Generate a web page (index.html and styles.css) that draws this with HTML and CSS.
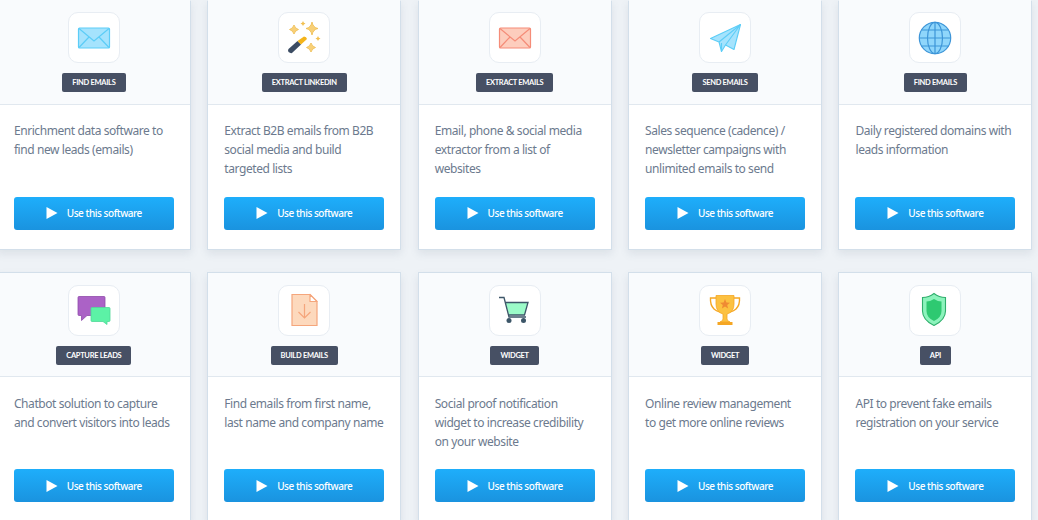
FILE: index.html
```html
<!DOCTYPE html>
<html lang="en">

<head>
    <meta charset="UTF-8">
    <meta name="viewport" content="width=device-width, initial-scale=1.0">
    <title>Software</title>
    <link rel="stylesheet" href="styles.css">
</head>

<body>
    <div class="grid">
        <div class="card">
            <div class="head">
                <div class="icon">
                    <svg width="40" height="40" viewBox="0 0 40 40">
                        <rect x="4.5" y="10" width="31" height="20" rx="1" fill="#a5e3fd" stroke="#5ccdf7" stroke-width="1.2" />
                        <path d="M5 10.5 L20 23 L35 10.5 M5 29.5 L15 19 M35 29.5 L25 19" fill="none" stroke="#5ccdf7" stroke-width="1.2" />
                    </svg>
                </div>
                <span class="tag">Find emails</span>
            </div>
            <div class="body">
                <p>Enrichment data software to find new leads (emails)</p>
                <a class="btn"><svg width="12" height="12" viewBox="0 0 12 12"><path d="M0.5 0 L11.5 6 L0.5 12 Z" fill="#fff" /></svg>Use this software</a>
            </div>
        </div>

        <div class="card">
            <div class="head">
                <div class="icon">
                    <svg width="40" height="40" viewBox="0 0 40 40">
                        <path d="M13.5 23 L17 26.5 L8 35 Q6.5 35.5 4.5 34 Q3.5 32 4.5 31 Z" fill="#3c4c63" />
                        <path d="M13.5 23 L20 18.5 Q22.5 18.5 23 21 L17 26.5 Z" fill="#f4b41a" />
                        <path d="M28 4 Q29 9.5 34 10.5 Q29 11.5 28 17 Q27 11.5 22 10.5 Q27 9.5 28 4 Z" fill="#f8d078" stroke="#eebb4d" stroke-width="0.8" />
                        <path d="M10 7 Q11 10.5 14.5 11.5 Q11 12.5 10 16 Q9 12.5 5.5 11.5 Q9 10.5 10 7 Z" fill="#f8d078" stroke="#eebb4d" stroke-width="0.8" />
                        <path d="M27 25 Q28 28.5 31.5 29.5 Q28 30.5 27 34 Q26 30.5 22.5 29.5 Q26 28.5 27 25 Z" fill="#f8d078" stroke="#eebb4d" stroke-width="0.8" />
                        <path d="M34 18 Q34.5 20 36.5 20.5 Q34.5 21 34 23 Q33.5 21 31.5 20.5 Q33.5 20 34 18 Z" fill="#f2c050" />
                        <path d="M19 3 Q19.5 5 21.5 5.5 Q19.5 6 19 8 Q18.5 6 16.5 5.5 Q18.5 5 19 3 Z" fill="#f2c050" />
                    </svg>
                </div>
                <span class="tag">Extract LinkedIn</span>
            </div>
            <div class="body">
                <p>Extract B2B emails from B2B social media and build targeted lists</p>
                <a class="btn"><svg width="12" height="12" viewBox="0 0 12 12"><path d="M0.5 0 L11.5 6 L0.5 12 Z" fill="#fff" /></svg>Use this software</a>
            </div>
        </div>

        <div class="card">
            <div class="head">
                <div class="icon">
                    <svg width="40" height="40" viewBox="0 0 40 40">
                        <rect x="4.5" y="10" width="31" height="20" rx="1" fill="#fdcdbd" stroke="#f58c78" stroke-width="1.2" />
                        <path d="M5 10.5 L20 23 L35 10.5 M5 29.5 L15 19 M35 29.5 L25 19" fill="none" stroke="#f58c78" stroke-width="1.2" />
                    </svg>
                </div>
                <span class="tag">Extract emails</span>
            </div>
            <div class="body">
                <p>Email, phone &amp; social media extractor from a list of websites</p>
                <a class="btn"><svg width="12" height="12" viewBox="0 0 12 12"><path d="M0.5 0 L11.5 6 L0.5 12 Z" fill="#fff" /></svg>Use this software</a>
            </div>
        </div>

        <div class="card">
            <div class="head">
                <div class="icon">
                    <svg width="40" height="40" viewBox="0 0 40 40">
                        <path d="M35.5 6.5 L5.5 20.5 L14 24 L16.5 33.5 L20.5 27 L29 31.5 Z" fill="#a5e3fd" stroke="#5ccdf7" stroke-width="1.1" stroke-linejoin="round" />
                        <path d="M35.5 6.5 L14 24 M35.5 6.5 L20.5 27 M16.5 33.5 L16.5 25" fill="none" stroke="#5ccdf7" stroke-width="1.1" />
                    </svg>
                </div>
                <span class="tag">Send emails</span>
            </div>
            <div class="body">
                <p>Sales sequence (cadence) / newsletter campaigns with unlimited emails to send</p>
                <a class="btn"><svg width="12" height="12" viewBox="0 0 12 12"><path d="M0.5 0 L11.5 6 L0.5 12 Z" fill="#fff" /></svg>Use this software</a>
            </div>
        </div>

        <div class="card">
            <div class="head">
                <div class="icon">
                    <svg width="40" height="40" viewBox="0 0 40 40">
                        <circle cx="20" cy="20" r="15.7" fill="#8fd6fb" stroke="#3d95d8" stroke-width="1.2" />
                        <ellipse cx="20" cy="20" rx="7.5" ry="15.7" fill="none" stroke="#3d95d8" stroke-width="1.2" />
                        <path d="M20 4.3 V35.7 M4.3 20 H35.7 M6.5 12 H33.5 M6.5 28 H33.5" fill="none" stroke="#3d95d8" stroke-width="1.2" />
                    </svg>
                </div>
                <span class="tag">Find emails</span>
            </div>
            <div class="body">
                <p>Daily registered domains with leads information</p>
                <a class="btn"><svg width="12" height="12" viewBox="0 0 12 12"><path d="M0.5 0 L11.5 6 L0.5 12 Z" fill="#fff" /></svg>Use this software</a>
            </div>
        </div>

        <div class="card">
            <div class="head">
                <div class="icon">
                    <svg width="40" height="40" viewBox="0 0 40 40">
                        <path d="M5 6.5 H30 Q31 6.5 31 7.5 V24.5 Q31 25.5 30 25.5 H13 L7.5 30.5 V25.5 H5 Q4 25.5 4 24.5 V7.5 Q4 6.5 5 6.5 Z" fill="#ab62c6" stroke="#8f4bab" stroke-width="0.8" />
                        <path d="M18 17.5 H35 Q36 17.5 36 18.5 V30.5 Q36 31.5 35 31.5 H33 V34.5 L29 31.5 H18 Q17 31.5 17 30.5 V18.5 Q17 17.5 18 17.5 Z" fill="#5cf2a6" stroke="#4fd898" stroke-width="0.8" />
                    </svg>
                </div>
                <span class="tag">Capture leads</span>
            </div>
            <div class="body">
                <p>Chatbot solution to capture and convert visitors into leads</p>
                <a class="btn"><svg width="12" height="12" viewBox="0 0 12 12"><path d="M0.5 0 L11.5 6 L0.5 12 Z" fill="#fff" /></svg>Use this software</a>
            </div>
        </div>

        <div class="card">
            <div class="head">
                <div class="icon">
                    <svg width="40" height="40" viewBox="0 0 40 40">
                        <path d="M8 4.5 H26 L33 11.5 V35.5 H8 Z" fill="#fdd9bd" stroke="#f5a67c" stroke-width="1.2" />
                        <path d="M26 4.5 V11.5 H33 Z" fill="#fff" stroke="#f5a67c" stroke-width="1.2" stroke-linejoin="round" />
                        <path d="M20.5 14 V28 M14.5 22 L20.5 28 L26.5 22" fill="none" stroke="#f5a67c" stroke-width="1.2" />
                    </svg>
                </div>
                <span class="tag">Build emails</span>
            </div>
            <div class="body">
                <p>Find emails from first name, last name and company name</p>
                <a class="btn"><svg width="12" height="12" viewBox="0 0 12 12"><path d="M0.5 0 L11.5 6 L0.5 12 Z" fill="#fff" /></svg>Use this software</a>
            </div>
        </div>

        <div class="card">
            <div class="head">
                <div class="icon">
                    <svg width="40" height="40" viewBox="0 0 40 40">
                        <path d="M10.5 12.5 H33 L29.5 25 H14 Z" fill="#9bfbc8" />
                        <path d="M4 7.5 H9 L14 27 H31 M10.5 12.5 H33 L29.5 25 H14" fill="none" stroke="#3c5668" stroke-width="1.3" />
                        <circle cx="14" cy="30.5" r="2.5" fill="#3c5668" />
                        <circle cx="28.5" cy="30.5" r="2.5" fill="#3c5668" />
                    </svg>
                </div>
                <span class="tag">Widget</span>
            </div>
            <div class="body">
                <p>Social proof notification widget to increase credibility on your website</p>
                <a class="btn"><svg width="12" height="12" viewBox="0 0 12 12"><path d="M0.5 0 L11.5 6 L0.5 12 Z" fill="#fff" /></svg>Use this software</a>
            </div>
        </div>

        <div class="card">
            <div class="head">
                <div class="icon">
                    <svg width="40" height="40" viewBox="0 0 40 40">
                        <path d="M11.5 8 H5.5 Q5 15 9 19 Q11 21 15 22 M28.5 8 H34.5 Q35 15 31 19 Q29 21 25 22" fill="none" stroke="#f5a623" stroke-width="1.4" />
                        <path d="M11 5.5 H29 V14 Q29 22 22 24 V29 Q22 31 25 32 H15 Q18 31 18 29 V24 Q11 22 11 14 Z" fill="#fcc140" stroke="#f5a623" stroke-width="0.8" />
                        <rect x="12.5" y="32" width="15" height="3" fill="#f5a623" />
                        <path d="M20 9 L21.4 12.4 L25 12.7 L22.2 15 L23.1 18.5 L20 16.6 L16.9 18.5 L17.8 15 L15 12.7 L18.6 12.4 Z" fill="#ef8a33" />
                    </svg>
                </div>
                <span class="tag">Widget</span>
            </div>
            <div class="body">
                <p>Online review management<br>to get more online reviews</p>
                <a class="btn"><svg width="12" height="12" viewBox="0 0 12 12"><path d="M0.5 0 L11.5 6 L0.5 12 Z" fill="#fff" /></svg>Use this software</a>
            </div>
        </div>

        <div class="card">
            <div class="head">
                <div class="icon">
                    <svg width="40" height="40" viewBox="0 0 40 40">
                        <path d="M19 3.5 Q24 7.5 30.5 7.5 V21 Q30.5 30 19 35.5 Q7.5 30 7.5 21 V7.5 Q14 7.5 19 3.5 Z" fill="#8cf3bc" stroke="#2fae6c" stroke-width="1.1" />
                        <path d="M19 9 Q23 11.5 26.5 11.5 V21 Q26.5 27.5 19 31 Q11.5 27.5 11.5 21 V11.5 Q15 11.5 19 9 Z" fill="#2ec971" />
                    </svg>
                </div>
                <span class="tag">API</span>
            </div>
            <div class="body">
                <p>API to prevent fake emails registration on your service</p>
                <a class="btn"><svg width="12" height="12" viewBox="0 0 12 12"><path d="M0.5 0 L11.5 6 L0.5 12 Z" fill="#fff" /></svg>Use this software</a>
            </div>
        </div>
    </div>
</body>

</html>
```
FILE: styles.css
```css
html,
body {
    height: 100%;
    overflow: hidden;
}

body {
    margin: 0;
    background: #eef2f6;
    font-family: "Noto Sans", Arial, sans-serif;
}

.grid {
    display: grid;
    grid-template-columns: repeat(5, 193.9px);
    column-gap: 16.5px;
    row-gap: 22.4px;
    margin: -0.4px 0 0 -3.1px;
}

.card {
    background: #fff;
    border: 1px solid #d3dfea;
    box-shadow: 0 4px 8px rgba(90, 110, 135, 0.12);
}

.card:nth-child(-n+5) {
    border-top-color: #f9fbfd;
}

.head {
    display: flex;
    flex-direction: column;
    align-items: center;
    gap: 10px;
    height: 104px;
    box-sizing: border-box;
    padding-top: 11.5px;
    background: #f9fbfd;
    border-bottom: 1px solid #e1e8ef;
}

.icon {
    display: flex;
    align-items: center;
    justify-content: center;
    width: 52px;
    height: 51px;
    box-sizing: border-box;
    background: #fff;
    border: 1px solid #e8edf3;
    border-radius: 10px;
}

.tag {
    padding: 0 10px;
    height: 19px;
    line-height: 19px;
    background: #475064;
    border-radius: 2px;
    color: #fff;
    font-family: Lato, sans-serif;
    font-size: 7.5px;
    font-weight: 700;
    letter-spacing: -0.3px;
    text-transform: uppercase;
}

.body {
    padding: 16.5px 16px 19px;
}

.body p {
    margin: 0 0 18.5px;
    height: 57px;
    font-size: 12px;
    letter-spacing: -0.42px;
    line-height: 19px;
    color: #6c7a8e;
}

.btn {
    display: flex;
    align-items: center;
    justify-content: center;
    gap: 9px;
    height: 33px;
    background: linear-gradient(#1eaefb, #1a93df);
    border-radius: 3px;
    color: #fff;
    font-size: 10px;
    font-weight: 500;
    letter-spacing: -0.45px;
}
```
